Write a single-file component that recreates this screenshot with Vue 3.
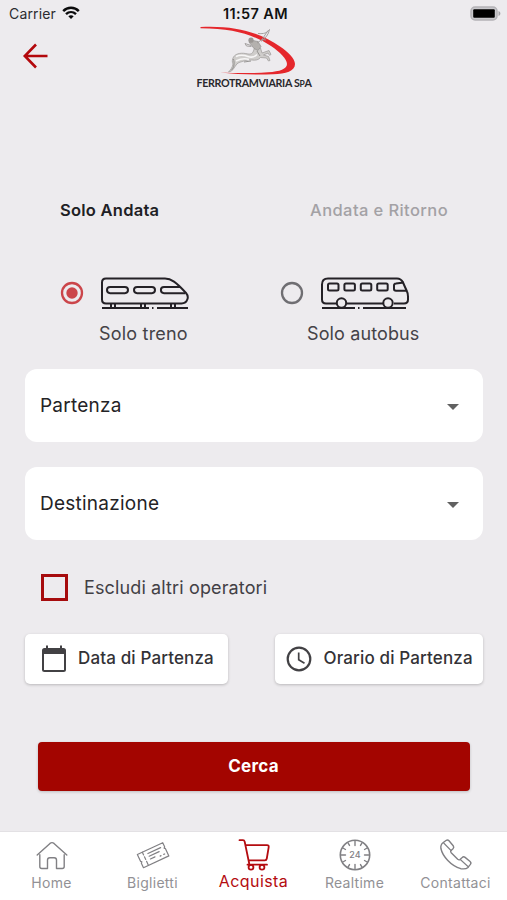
<script setup>
const modes = [
  { id: 'train', label: 'Solo treno', selected: true },
  { id: 'bus', label: 'Solo autobus', selected: false },
]
const fields = ['Partenza', 'Destinazione']
const nav = [
  { id: 'home', label: 'Home' },
  { id: 'ticket', label: 'Biglietti' },
  { id: 'cart', label: 'Acquista', active: true },
  { id: 'clock', label: 'Realtime' },
  { id: 'phone', label: 'Contattaci' },
]
const ticks = Array.from({ length: 12 }, (_, i) => i * 30)
</script>

<template>
  <div class="screen">
    <div class="status">
      <div class="carrier">
        <span>Carrier</span>
        <svg class="wifi" viewBox="0 0 18 14" fill="none" stroke="#0b0b0c" stroke-width="2.4">
          <path d="M1.200 5.100C5.500.7 12.500.7 16.800 5.100" />
          <path d="M4 8.200c2.900-2.800 7.100-2.800 10 0" />
          <path d="M6.300 10.300c1.600-1.500 3.800-1.500 5.400 0L9 13z" fill="#0b0b0c" stroke="none" />
        </svg>
      </div>
      <span class="time">11:57 AM</span>
      <svg class="battery" viewBox="0 0 32 16">
        <rect x="1" y="1" width="26" height="13" rx="4" fill="#c9c8cc" stroke="#b4b3b7" stroke-width="1.500" />
        <rect x="3.200" y="3.200" width="21.600" height="8.600" rx="1" fill="#000" />
        <path d="M28.500 5c2.500.8 2.500 4.200 0 5z" fill="#a5a4a8" />
      </svg>
    </div>

    <header class="header">
      <svg class="back" viewBox="0 0 26 26" fill="none" stroke="#b3080c" stroke-width="2.600">
        <path d="M25.500 13H3M14 1.500L2.800 13 14 24.500" />
      </svg>
      <div class="brand">
        <svg class="logo" viewBox="0 0 116 50">
          <path d="M4.500 1C42-.8 66 8 84 20.500 92 26 99 32.500 99 38c0 7-9 10-22 10.300-18 .4-36 .2-53-1.800 18 .8 34 .8 48-.2 12-.8 19-3.300 19-8.300 0-5-7-12-16-18C57 8.500 38 2.500 4.500 2.200z" fill="#e5272c" />
          <path d="M32.500 46c2.500-2.500 4-5 4.500-8-1-2-1-4.500.5-7C40 27 46 26.500 52 28c3 .5 4.500-.5 5.500-3l1.500-5 5.500 2 1.500 5 7-2.500 2 4-1.500.8-1.500-2.300-4.500 2 5 1.500 1.500 4-1.500.5-2-3-6-.5c-2 2.500-5 3-8.500 2.500-5-.7-9 1.500-13 2.500-3 1-4.500 6-7.500 8.500z" fill="#cfcdcb" stroke="#9c9a98" stroke-width=".7" />
          <path d="M40 30.500c4-2 8-1.500 12 0s7 0 9-2M40 35c4-2 8-3.500 13-1.500" fill="none" stroke="#f7f6f6" stroke-width="1.500" />
          <path d="M37.500 33c1 4 1 8-2 11M61 25l3 5M48 36l7-1" fill="none" stroke="#8c8a88" stroke-width=".9" />
          <path d="M53 16l4-1.500 5 1 3 5-3 4-4-2z" fill="#b4b1ae" stroke="#8c8a88" stroke-width=".6" />
          <circle cx="55" cy="14.200" r="2.600" fill="#9b9794" />
          <path d="M55 19.500l-6-2 1.500 2.500 5 .5M61 17l5-3.500 6-9M66 13.500l4 .5M62 7.500c6 .5 9-.5 11.500-4-1 5.500-4 8-8 12" fill="none" stroke="#9c9997" stroke-width=".9" />
        </svg>
        <span class="brand-name">FERROTRAMVIARIA S<span class="small">P</span>A</span>
      </div>
    </header>

    <div class="tabs">
      <span class="tab current">Solo Andata</span>
      <span class="tab">Andata e Ritorno</span>
    </div>

    <div class="modes">
      <div v-for="m in modes" :key="m.id" class="mode" :class="m.id">
        <div class="mode-row">
          <svg class="radio" :class="{ on: m.selected }" viewBox="0 0 24 24">
            <circle cx="12" cy="12" r="10" fill="none" stroke="currentColor" stroke-width="2.300" />
            <circle v-if="m.selected" cx="12" cy="12" r="5.700" fill="currentColor" />
          </svg>
          <svg v-if="m.id === 'train'" class="vehicle" viewBox="0 0 88 34" fill="none" stroke="#242126" stroke-width="2">
            <path d="M5 1.500H64C70 1.500 75 5 85 16q2.500 3 1.500 6-1.500 4.500-6 4.500H5q-4 0-4-4V5.500q0-4 4-4z" />
            <rect x="6" y="10" width="21" height="6.200" rx="3.100" />
            <rect x="33" y="10" width="21" height="6.200" rx="3.100" />
            <path d="M79 10H63a3.100 3.100 0 0 0 0 6.200H84M10 27v4M14 27v4M40 27v4M44 27v4M70 27v4M74 27v4M1 31h47M56 31h31" />
            <path d="M51 31h1.500" />
          </svg>
          <svg v-else class="vehicle" viewBox="0 0 88 34" fill="none" stroke="#242126" stroke-width="2">
            <path d="M16 26.500H5q-4 0-4-4V7.500q0-6 6-6H76q4 0 6 4l4 9q1 2 1 5v3q0 4-4 4H73M62 26.500H26" />
            <rect v-for="n in 4" :key="n" :x="7 + (n - 1) * 16.400" y="6.500" width="10.500" height="7" rx="1.500" />
            <path d="M83 5.500l-8 1q-2 .2-2 2v3.500q0 1.800 2 1.800h11" />
            <circle cx="20.500" cy="26" r="4.700" /><circle cx="67" cy="26" r="4.700" />
            <path d="M1 31h33M37 31h1.500M42 31h43" />
          </svg>
        </div>
        <span class="mode-label">{{ m.label }}</span>
      </div>
    </div>

    <div class="fields">
      <div v-for="f in fields" :key="f" class="field">
        <span>{{ f }}</span>
        <svg class="caret" viewBox="0 0 14 8"><path d="M1 1h12L7 7z" fill="#616161" /></svg>
      </div>
    </div>

    <div class="exclude">
      <span class="checkbox"></span>
      <span class="exclude-label">Escludi altri operatori</span>
    </div>

    <div class="pickers">
      <div class="picker date">
        <svg class="cal" viewBox="0 0 26 28">
          <path d="M3.500 3h19q2.500 0 2.500 2.500v19q0 2.500-2.500 2.500h-19Q1 27 1 24.500v-19Q1 3 3.500 3zM3 9v16h20V9z" fill="#424144" fill-rule="evenodd" />
          <path d="M6 .5v4M20 .5v4" stroke="#424144" stroke-width="2" />
        </svg>
        <span>Data di Partenza</span>
      </div>
      <div class="picker hour">
        <svg class="dial" viewBox="0 0 26 26" fill="none" stroke="#424144">
          <circle cx="13" cy="13" r="11.300" stroke-width="2.200" />
          <path d="M12.700 6.500v7.200l5.800 3.500" stroke-width="1.700" />
        </svg>
        <span>Orario di Partenza</span>
      </div>
    </div>

    <button class="search">Cerca</button>

    <nav class="nav">
      <div v-for="n in nav" :key="n.id" class="item" :class="[n.id, { active: n.active }]">
        <svg class="icon" viewBox="0 0 32 32" fill="none" stroke="currentColor" stroke-width="1.400" stroke-linecap="round" stroke-linejoin="round">
          <g v-if="n.id === 'home'">
            <path d="M3.800 15.700v11.800q0 2 2 2h5.700V21q0-2.300 2.300-2.300h4.400q2.300 0 2.300 2.300v8.500h5.700q2 0 2-2V15.700" />
            <path d="M1.200 16L14 4.400q2-1.500 4 0L30.800 16" />
          </g>
          <g v-else-if="n.id === 'ticket'" transform="rotate(-25 16 16)" stroke-width="1.200">
            <path d="M2 9H30v4.500l-1 1 1 1v8H2v-5l1-1-1-1z" />
            <path d="M7.500 9v3M7.500 14v3M7.500 19v4M12 12.500h14M12 15.500h11M12 18.500h5M22 20h1M26 20h1" />
          </g>
          <g v-else-if="n.id === 'cart'" stroke-width="1.800">
            <path d="M1.500 1.200H5q1.300 0 1.700 1.500L11.200 24.500M7.500 6.200H29q2 0 1.700 2L28.800 19.500q-.3 1.800-2 1.800H10.500M9.500 25.700h19.500" />
            <circle cx="13" cy="28.300" r="2.400" /><circle cx="24" cy="28.300" r="2.400" />
          </g>
          <g v-else-if="n.id === 'clock'">
            <circle cx="16" cy="16" r="14.700" stroke-width="1.600" />
            <path v-for="a in ticks" :key="a" :d="a % 90 ? 'M16 2v3' : 'M16 2v4.500'" :transform="`rotate(${a} 16 16)`" />
            <text x="16" y="19.200" text-anchor="middle" class="dial-text">24</text>
          </g>
          <g v-else>
            <path d="M3.300 3.500L6 1.500q1.700-1.200 3 .3l4.200 5q1.200 1.500-.2 3l-1.900 1.700q-1 1 .1 2.300l6.500 6.500q1.300 1 2.300.2l2.200-2q1.300-1.300 2.900-.1l5 4.100q1.500 1.300.3 2.900l-2.400 3q-2 2-7.200 1.300C10.500 26.500 2.500 17 .9 9.500Q.3 5.800 3.300 3.500z" />
            <path d="M3.700 4l7.300 7.500M20.300 20.500l8.200 7.500" stroke-width="1.100" />
          </g>
        </svg>
        <span class="nav-label">{{ n.label }}</span>
      </div>
    </nav>
  </div>
</template>

<style>
body { background: #edebee; }
</style>

<style scoped>
* { box-sizing: border-box; }
.screen {
  width: 507px; height: 900px; display: flex; flex-direction: column;
  background: #edebee; color: #242326; overflow: hidden;
  font-family: Inter, "Liberation Sans", sans-serif; white-space: nowrap;
}
.status {
  height: 28px; flex: none; display: grid; grid-template-columns: 1fr auto 1fr;
  align-items: center; padding: 0 5px 1px 9px; font-size: 14px;
}
.carrier { display: flex; align-items: center; gap: 6px; color: #2c2b30; letter-spacing: .15px; }
.wifi { width: 18px; height: 14px; margin-top: -2px; }
.time { font-weight: 600; color: #111; font-size: 14.500px; letter-spacing: .4px; }
.battery { width: 32px; height: 16px; justify-self: end; }
.header { height: 170px; flex: none; display: grid; grid-template-columns: 173px 116px; align-items: start; column-gap: 23px; }
.back { width: 26px; height: 26px; margin: 15px 0 0 22px; }
.brand { display: flex; flex-direction: column; align-items: center; margin-top: -2px; }
.logo { width: 116px; height: 50px; }
.brand-name { font-family: Lato, sans-serif; font-size: 10.700px; line-height: 13px; font-weight: 700; letter-spacing: -.33px; color: #29282c; }
.small { font-size: 8.500px; }
.tabs { height: 24px; flex: none; display: flex; justify-content: space-between; padding: 0 59px 0 60px; font-size: 16.500px; line-height: 24px; font-weight: 500; color: #a3a1a5; }
.tab { letter-spacing: .4px; }
.current { color: #202024; font-weight: 600; letter-spacing: .25px; }
.modes { height: 147px; flex: none; display: grid; grid-template-columns: 220px 1fr; padding: 53px 0 0 60px; }
.mode { display: flex; flex-direction: column; }
.mode-row { display: flex; align-items: center; gap: 17px; height: 36px; }
.radio { width: 24px; height: 24px; color: #6f6e72; }
.radio.on { color: #cb454a; }
.vehicle { width: 88px; height: 34px; margin-top: 1px; }
.mode-label { font-size: 18px; line-height: 24px; margin-top: 11px; padding-left: 39px; color: #444247; letter-spacing: .2px; }
.bus .mode-label { padding-left: 27px; letter-spacing: .12px; }
.fields { flex: none; display: flex; flex-direction: column; gap: 25px; padding: 0 24.500px 0 25px; }
.field { height: 73px; background: #fff; border-radius: 12px; display: flex; align-items: center; justify-content: space-between; padding: 0 22.500px 0 15px; font-size: 19px; letter-spacing: .24px; }
.caret { width: 14px; height: 8px; margin-top: 3px; }
.exclude { height: 94px; flex: none; display: flex; align-items: center; gap: 16px; padding: 1px 0 0 41px; }
.checkbox { width: 27px; height: 27px; border: 3px solid #a60b0d; }
.exclude-label { font-size: 18px; color: #424045; letter-spacing: .13px; }
.pickers { flex: none; display: flex; justify-content: space-between; padding: 0 24.500px 0 25px; }
.picker { height: 50px; background: #fff; border-radius: 5px; box-shadow: 0 1px 3px rgba(0, 0, 0, .22); display: flex; align-items: center; font-size: 17px; font-weight: 500; color: #333236; letter-spacing: .14px; }
.picker span { margin-top: -2px; }
.date { width: 203px; padding-left: 16px; gap: 11px; }
.hour { width: 208px; padding-left: 11.500px; gap: 11.500px; }
.cal { width: 26px; height: 28px; }
.dial { width: 26px; height: 26px; }
.search { height: 49px; flex: none; margin: 57.500px 37px 0 38px; padding: 0 1px 1px 0; border: 0; border-radius: 4px; background: #a30500; color: #fff; font: 700 17px/24px Inter, sans-serif; letter-spacing: .25px; box-shadow: 0 1px 3px rgba(0, 0, 0, .2); }
.nav { height: 69px; margin-top: auto; flex: none; background: #fff; border-top: 1px solid #e3e1e4; display: grid; grid-template-columns: repeat(5, 101px); justify-content: center; }
.item { display: flex; flex-direction: column; align-items: center; padding-top: 7px; color: #818084; }
.icon { width: 32px; height: 32px; overflow: visible; }
.nav-label { font-size: 14px; line-height: 18px; margin-top: 3px; color: #929195; letter-spacing: .28px; }
.active, .active .nav-label { color: #b40c10; }
.active .nav-label { font-size: 16px; margin-top: 1px; letter-spacing: .4px; }
.dial-text { font-size: 9px; font-family: Inter, sans-serif; fill: currentColor; stroke: none; font-weight: 500; }
</style>
